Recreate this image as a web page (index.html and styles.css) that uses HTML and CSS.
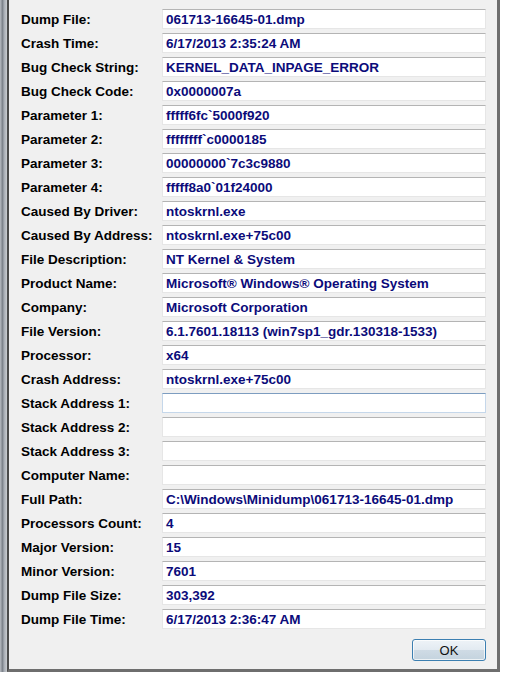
FILE: index.html
```html
<!DOCTYPE html>
<html>
  <head>
    <title>Properties</title>
    <link rel="stylesheet" href="styles.css">
  </head>

  <body>
    <div class="desktop">
      <div class="edge"></div>
      <div class="window">
        <div class="client">
          <div class="fields">
            <label>Dump File:</label>
            <div class="value">061713-16645-01.dmp</div>
            <label>Crash Time:</label>
            <div class="value">6/17/2013 2:35:24 AM</div>
            <label>Bug Check String:</label>
            <div class="value">KERNEL_DATA_INPAGE_ERROR</div>
            <label>Bug Check Code:</label>
            <div class="value">0x0000007a</div>
            <label>Parameter 1:</label>
            <div class="value">fffff6fc`5000f920</div>
            <label>Parameter 2:</label>
            <div class="value">ffffffff`c0000185</div>
            <label>Parameter 3:</label>
            <div class="value">00000000`7c3c9880</div>
            <label>Parameter 4:</label>
            <div class="value">fffff8a0`01f24000</div>
            <label>Caused By Driver:</label>
            <div class="value">ntoskrnl.exe</div>
            <label>Caused By Address:</label>
            <div class="value">ntoskrnl.exe+75c00</div>
            <label>File Description:</label>
            <div class="value">NT Kernel &amp; System</div>
            <label>Product Name:</label>
            <div class="value">Microsoft® Windows® Operating System</div>
            <label>Company:</label>
            <div class="value">Microsoft Corporation</div>
            <label>File Version:</label>
            <div class="value">6.1.7601.18113 (win7sp1_gdr.130318-1533)</div>
            <label>Processor:</label>
            <div class="value">x64</div>
            <label>Crash Address:</label>
            <div class="value">ntoskrnl.exe+75c00</div>
            <label>Stack Address 1:</label>
            <div class="value focused"></div>
            <label>Stack Address 2:</label>
            <div class="value"></div>
            <label>Stack Address 3:</label>
            <div class="value"></div>
            <label>Computer Name:</label>
            <div class="value"></div>
            <label>Full Path:</label>
            <div class="value">C:\Windows\Minidump\061713-16645-01.dmp</div>
            <label>Processors Count:</label>
            <div class="value">4</div>
            <label>Major Version:</label>
            <div class="value">15</div>
            <label>Minor Version:</label>
            <div class="value">7601</div>
            <label>Dump File Size:</label>
            <div class="value">303,392</div>
            <label>Dump File Time:</label>
            <div class="value">6/17/2013 2:36:47 AM</div>
          </div>
          <div class="actions">
            <button class="ok-btn" type="button">OK</button>
          </div>
        </div>
      </div>
    </div>
  </body>
</html>
```

FILE: styles.css
```css
body {
  margin: 0;
  background: #ffffff;
  font-family: "Liberation Sans", Arial, sans-serif;
}
.desktop {
  display: flex;
  width: 506px;
  height: 676px;
}
.edge {
  width: 7px;
  height: 672px;
  background: linear-gradient(to right, #b9bdc3, #7d838b 35%, #a9aeb5 60%, #c9ccd0);
}
.window {
  width: 488px;
  height: 669px;
  border-left: 2px solid #4b4b4b;
  border-right: 3px solid #6e6e6e;
  border-bottom: 3px solid #6e6e6e;
}
.client {
  height: 100%;
  box-sizing: border-box;
  background: #f0f0f0;
  padding: 9px 11px 0 12px;
}
.fields {
  display: grid;
  grid-template-columns: 141px 324px;
  grid-auto-rows: 20px;
  row-gap: 4px;
}
.fields label {
  display: flex;
  align-items: center;
  font-size: 13.5px;
  font-weight: 700;
  color: #000;
}
.value {
  box-sizing: border-box;
  display: flex;
  align-items: center;
  padding-left: 3px;
  background: #fff;
  border: 1px solid #e6e6e6;
  border-top-color: #b4b4b4;
  font-size: 13.5px;
  font-weight: 700;
  color: #0b0b7a;
  white-space: nowrap;
  overflow: hidden;
}
.value.focused {
  border-color: #c5d7ea;
  border-top-color: #7d9dc0;
}
.actions {
  display: flex;
  justify-content: flex-end;
  margin-top: 10px;
}
.ok-btn {
  width: 74px;
  height: 22px;
  padding: 0;
  border: 1px solid #3c7fb1;
  border-radius: 3px;
  background: linear-gradient(to bottom, #eef3f7 0%, #e2eaf1 50%, #cfdbe5 51%, #c4d3de 100%);
  box-shadow: inset 0 0 0 1px rgba(255, 255, 255, 0.7);
  font-family: "Liberation Sans", Arial, sans-serif;
  font-size: 13px;
  color: #111;
}
```
